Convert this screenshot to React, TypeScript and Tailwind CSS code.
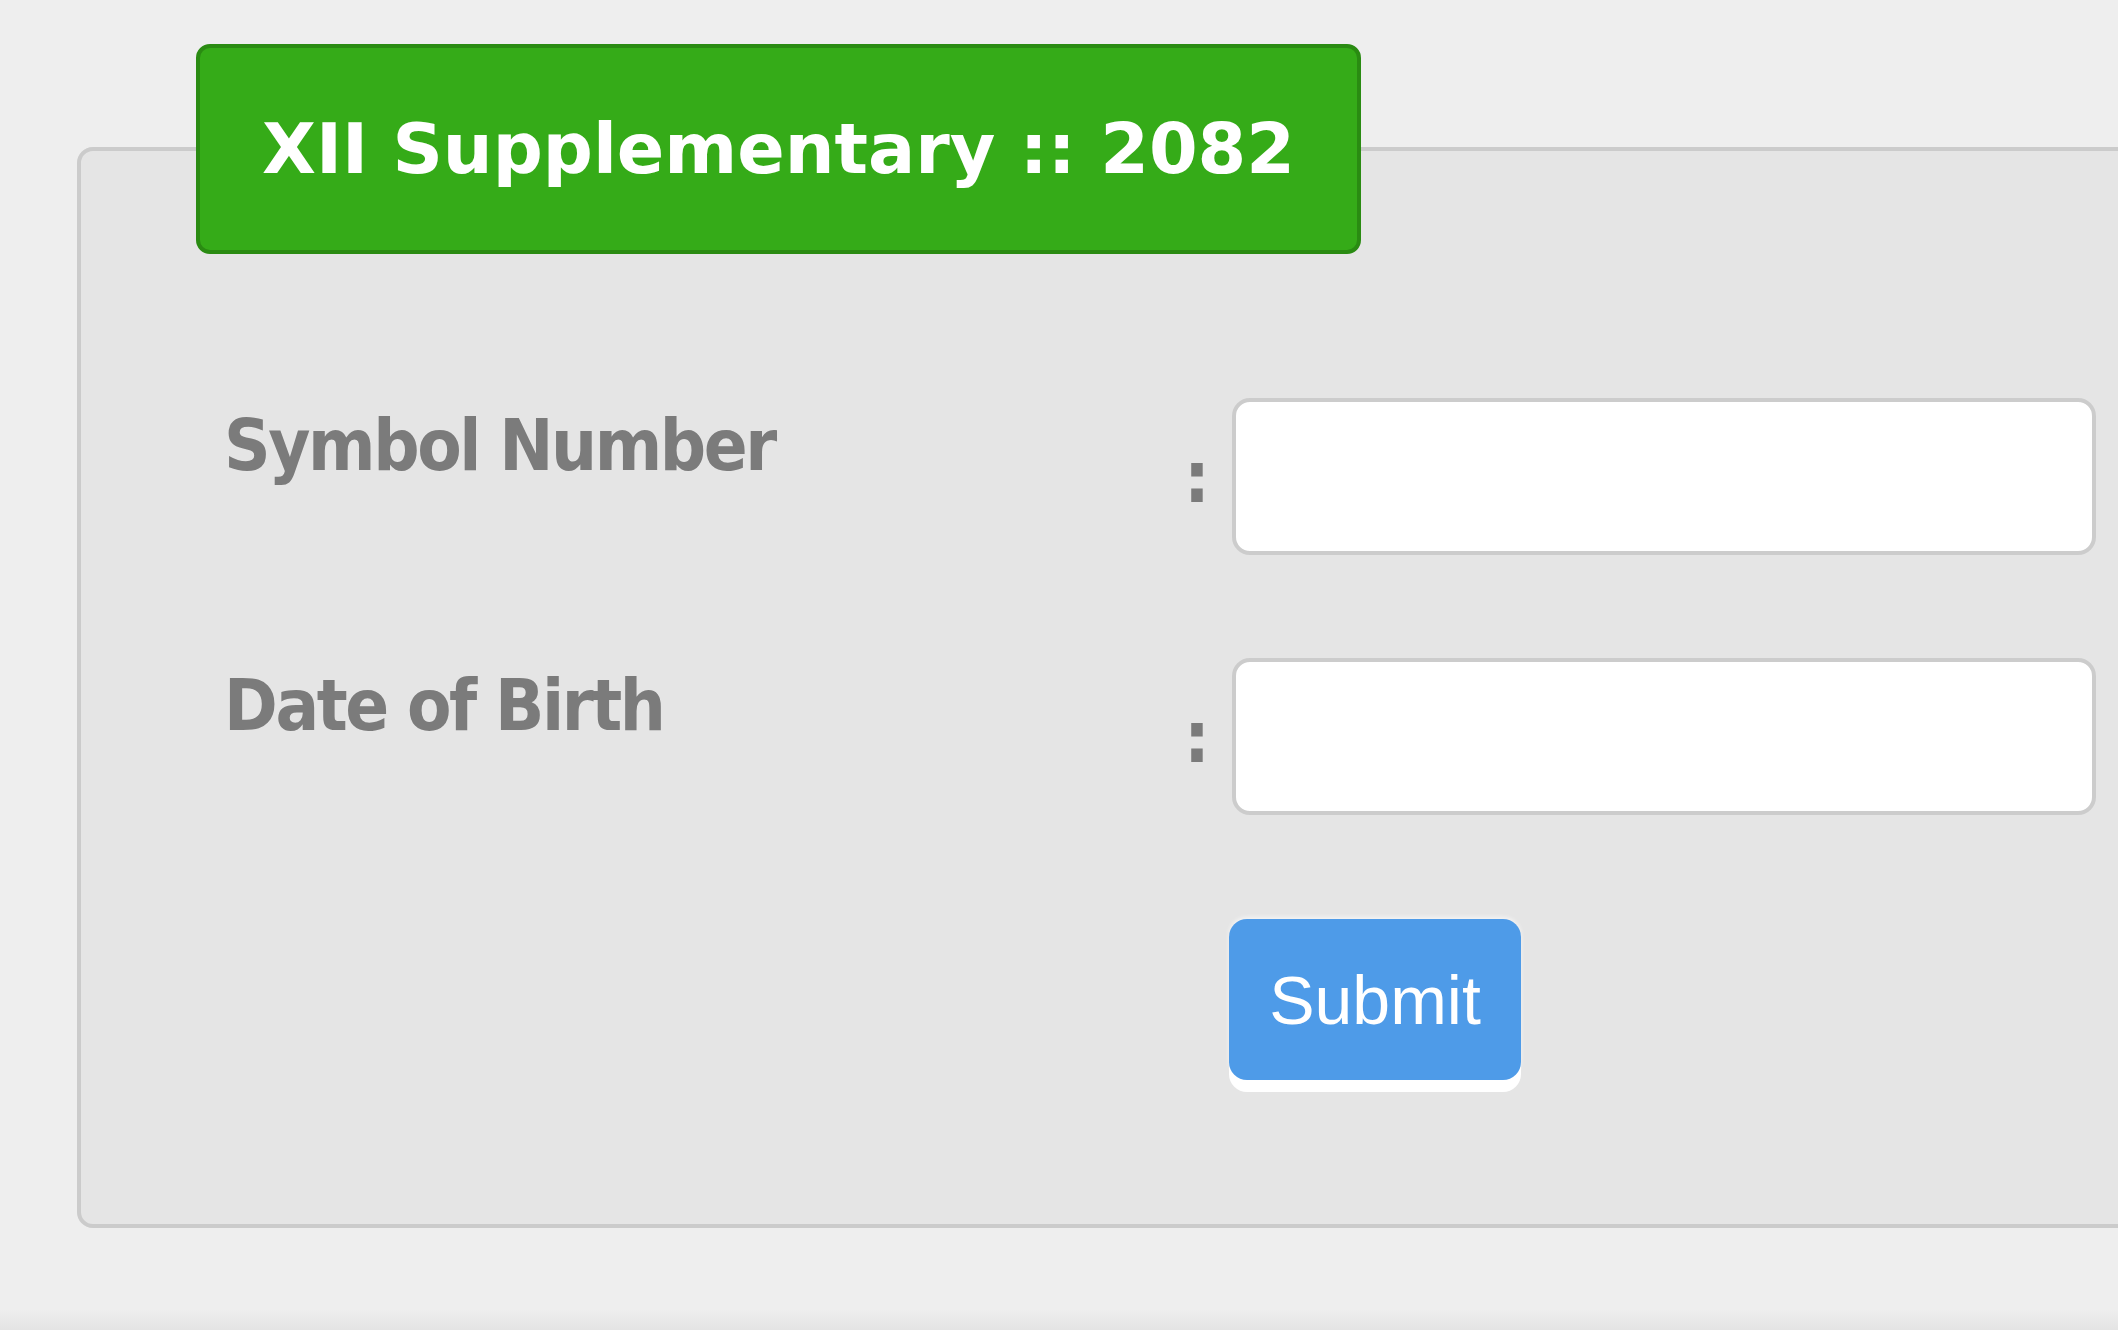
import React from "react";

const labelFont = { fontFamily: '"DejaVu Sans Condensed", "DejaVu Sans", Tahoma, sans-serif' };
const titleFont = { fontFamily: '"DejaVu Sans", Verdana, sans-serif' };

function Row({ label }: { label: string }) {
  return (
    <div className="flex items-start">
      <div
        className="w-[959px] mt-[11px] text-[72px] leading-[72px] font-bold tracking-[-2.4px] text-[#7b7b7b] whitespace-nowrap"
        style={labelFont}
      >
        {label}
      </div>
      <div className="flex items-center h-[157px]">
        <span
          className="w-[28px] text-center text-[72px] leading-[72px] font-bold text-[#7b7b7b]"
          style={labelFont}
        >
          :
        </span>
        <input
          type="text"
          className="ml-[21px] w-[864px] h-[157px] bg-white border-4 border-solid border-[#cccccc] rounded-[18px] outline-none"
        />
      </div>
    </div>
  );
}

export default function App() {
  return (
    <div className="w-[2118px] h-[1330px] overflow-hidden bg-[#eeeeee] flex flex-col">
      <div className="pt-[44px] pl-[77px]">
        <fieldset className="w-[2200px] shrink-0 border-4 border-solid border-[#cbcbcb] rounded-[16px] bg-[#e5e5e5] p-0 m-0">
          <legend className="ml-[115px] p-0 w-[1165px] h-[210px] rounded-[14px] border-4 border-solid border-[#2a8b12] bg-[#35ab18] flex items-center justify-center">
            <span
              className="text-white font-bold text-[70px] leading-[70px] whitespace-nowrap"
              style={titleFont}
            >
              XII Supplementary :: 2082
            </span>
          </legend>

          <div className="flex flex-col gap-[103px] pl-[143px] pt-[144px] pb-[144px]">
            <Row label="Symbol Number" />
            <Row label="Date of Birth" />

            <div className="pl-[1005px] pt-[1px]">
              <button
                type="button"
                className="w-[292px] h-[161px] rounded-[18px] bg-[#4e9be8] text-white text-[68px] leading-[68px] shadow-[0_12px_0_#ffffff,0_-2px_4px_rgba(255,255,255,0.6)] flex items-center justify-center"
                style={{ fontFamily: '"Liberation Sans", Arial, Helvetica, sans-serif' }}
              >
                Submit
              </button>
            </div>
          </div>
        </fieldset>
      </div>
      <div className="flex-1" />
      <div className="h-[20px] bg-gradient-to-b from-[#eeeeee] to-[#e4e4e4]" />
    </div>
  );
}
